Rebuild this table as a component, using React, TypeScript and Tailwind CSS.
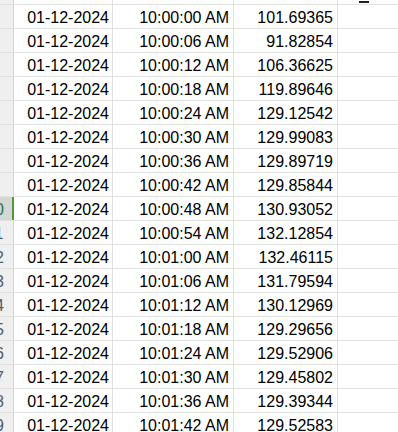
const rows: [string, string, string, string][] = [
  ['2', '01-12-2024', '10:00:00 AM', '101.69365'],
  ['3', '01-12-2024', '10:00:06 AM', '91.82854'],
  ['4', '01-12-2024', '10:00:12 AM', '106.36625'],
  ['5', '01-12-2024', '10:00:18 AM', '119.89646'],
  ['6', '01-12-2024', '10:00:24 AM', '129.12542'],
  ['7', '01-12-2024', '10:00:30 AM', '129.99083'],
  ['8', '01-12-2024', '10:00:36 AM', '129.89719'],
  ['9', '01-12-2024', '10:00:42 AM', '129.85844'],
  ['10', '01-12-2024', '10:00:48 AM', '130.93052'],
  ['11', '01-12-2024', '10:00:54 AM', '132.12854'],
  ['12', '01-12-2024', '10:01:00 AM', '132.46115'],
  ['13', '01-12-2024', '10:01:06 AM', '131.79594'],
  ['14', '01-12-2024', '10:01:12 AM', '130.12969'],
  ['15', '01-12-2024', '10:01:18 AM', '129.29656'],
  ['16', '01-12-2024', '10:01:24 AM', '129.52906'],
  ['17', '01-12-2024', '10:01:30 AM', '129.45802'],
  ['18', '01-12-2024', '10:01:36 AM', '129.39344'],
  ['19', '01-12-2024', '10:01:42 AM', '129.52583'],
];

const SELECTED = '10';

// only the right edge of the row-number column is in view
function RowHeader({ label }: { label: string }) {
  const selected = label === SELECTED;
  return (
    <div
      className={
        selected
          ? 'w-[14px] shrink-0 flex justify-end overflow-hidden bg-[#d6d6d6] border-r-2 border-[#4e9a2f] text-[#217346]'
          : 'w-[14px] shrink-0 flex justify-end overflow-hidden bg-[#efefef] border-r border-[#d4d4d4] text-[#4f5b67]'
      }
    >
      <div
        className={
          selected
            ? 'w-[34px] shrink-0 text-center pt-[4px] whitespace-nowrap'
            : 'w-[36px] shrink-0 text-center pt-[4px] whitespace-nowrap'
        }
      >
        {label}
      </div>
    </div>
  );
}

export default function App() {
  return (
    <div
      className="relative w-[398px] h-[432px] overflow-hidden bg-white text-black text-[16px] leading-[18px]"
      style={{ fontFamily: '"Liberation Sans", Arial, sans-serif' }}
    >
      {/* sliver of the row above */}
      <div className="flex h-[5px] border-b border-[#e1e1e1]">
        <div className="w-[14px] shrink-0 bg-[#efefef] border-r border-[#d4d4d4]" />
        <div className="w-[99px] shrink-0 border-r border-[#e1e1e1]" />
        <div className="w-[121px] shrink-0 border-r border-[#e1e1e1]" />
        <div className="w-[104px] shrink-0 border-r border-[#e1e1e1]" />
        <div className="flex-1" />
      </div>

      {rows.map(([n, date, time, value]) => (
        <div key={n} className="flex h-[24px] border-b border-[#e1e1e1]">
          <RowHeader label={n} />
          <div className="w-[99px] shrink-0 border-r border-[#e1e1e1] text-right pr-[3px] pt-[4px] whitespace-nowrap">
            {date}
          </div>
          <div className="w-[121px] shrink-0 border-r border-[#e1e1e1] text-right pr-[4px] pt-[4px] whitespace-nowrap">
            {time}
          </div>
          <div className="w-[104px] shrink-0 border-r border-[#e1e1e1] text-right pr-[4px] pt-[4px] whitespace-nowrap">
            {value}
          </div>
          <div className="flex-1" />
        </div>
      ))}

      {/* little dash at the top edge */}
      <div className="absolute left-[359px] top-[1px] w-[10px] h-[2px] bg-[#222]" />
    </div>
  );
}
